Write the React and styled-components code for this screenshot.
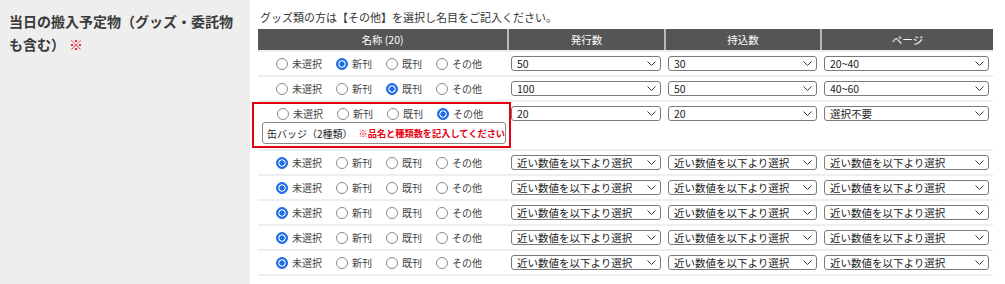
import styled, { createGlobalStyle } from "styled-components";

const GlobalStyle = createGlobalStyle`
  * {
    box-sizing: border-box;
  }
  body {
    margin: 0;
    background: #fff;
    color: #333;
    font-family: "Noto Sans CJK JP", "Noto Sans", sans-serif;
  }
`;

const Layout = styled.div`
  display: flex;
  width: 1005px;
  height: 284px;
`;

const Side = styled.div`
  width: 250px;
  flex-shrink: 0;
  background: #eee;
  padding: 10px 9px;
`;

const Title = styled.h2`
  margin: 0;
  font-size: 14px;
  line-height: 23px;
  font-weight: bold;
  color: #3a3a3a;
`;

const Required = styled.span`
  display: inline-block;
  color: #e60012;
  font-weight: normal;
  margin-left: 4px;
`;

const Main = styled.div`
  flex: 1;
  padding: 9px 12px 0 8px;
`;

const Note = styled.p`
  margin: 0 0 4px 2px;
  font-size: 11px;
  line-height: 16px;
  color: #333;
`;

const Table = styled.table`
  width: 735px;
  border-collapse: collapse;
  table-layout: fixed;
`;

const HeadCell = styled.th`
  height: 22px;
  padding: 0;
  background: #555;
  color: #fff;
  font-size: 10.5px;
  font-weight: normal;
  text-align: center;
  border-bottom: 2px solid #eee;
  & + & {
    border-left: 2px solid #b9b9b9;
  }
`;

const Row = styled.tr`
  border-bottom: 2px solid #eee;
`;

const Cell = styled.td`
  position: relative;
  vertical-align: top;
  padding: 4px 4px 4px 3px;
`;

const NameCell = styled(Cell)`
  padding: ${(p) => (p.$wide ? "4px 2px 5px 4px" : "4px 4px 4px 4px")};
`;

const RadioGroup = styled.div`
  display: flex;
  justify-content: center;
  align-items: center;
  gap: 14px;
  height: 15px;
  padding-right: 8px;
`;

const RadioLabel = styled.label`
  display: flex;
  align-items: center;
  font-size: 10px;
  line-height: 15px;
  color: #444;
`;

const Radio = styled.input.attrs({ type: "radio" })`
  appearance: none;
  width: 12px;
  height: 12px;
  margin: 0 4px 0 0;
  border: 1px solid #8a8a8a;
  border-radius: 50%;
  background: #fff;

  &:checked {
    border-color: #1f6fe6;
    background: radial-gradient(
      circle,
      #1f6fe6 0 2.4px,
      #fff 2.9px 3.4px,
      #1f6fe6 3.9px
    );
  }
`;

const NameBox = styled.div`
  display: flex;
  align-items: center;
  gap: 6px;
  height: 22px;
  margin-top: 1px;
  padding: 0 4px;
  border: 1px solid #8a8a8a;
  border-radius: 3px;
  font-size: 10px;
  color: #222;
  white-space: nowrap;
  overflow: hidden;
`;

const Hint = styled.span`
  color: #e60012;
  font-weight: bold;
  font-size: 9.2px;
`;

const Highlight = styled.div`
  position: absolute;
  top: 0;
  left: -6px;
  right: -3px;
  bottom: 1px;
  border: 2px solid #e60012;
  pointer-events: none;
`;

const SelectWrap = styled.div`
  position: relative;
  height: 15px;
`;

const Select = styled.select`
  appearance: none;
  display: block;
  width: 100%;
  height: 15px;
  margin: 0;
  padding: 0 16px 0 5px;
  border: 1px solid #7a7a7a;
  border-radius: 3px;
  background: #fff;
  font-family: inherit;
  font-size: 10.5px;
  line-height: 13px;
  color: #222;
`;

const Chevron = styled.svg`
  position: absolute;
  top: 5px;
  right: 5px;
  width: 9px;
  height: 5px;
  pointer-events: none;
`;

const PLACEHOLDER = "近い数値を以下より選択";
const KINDS = ["未選択", "新刊", "既刊", "その他"];

const rows = [
  { kind: "新刊", issue: "50", carry: "30", page: "20~40" },
  { kind: "既刊", issue: "100", carry: "50", page: "40~60" },
  { kind: "その他", issue: "20", carry: "20", page: "選択不要", name: "缶バッジ（2種類）" },
  { kind: "未選択" },
  { kind: "未選択" },
  { kind: "未選択" },
  { kind: "未選択" },
  { kind: "未選択" },
];

function Dropdown({ value }) {
  const shown = value || PLACEHOLDER;
  return (
    <SelectWrap>
      <Select defaultValue={shown}>
        <option>{shown}</option>
      </Select>
      <Chevron viewBox="0 0 9 5">
        <polyline points="0.5,0.5 4.5,4.5 8.5,0.5" fill="none" stroke="#333" strokeWidth="1" />
      </Chevron>
    </SelectWrap>
  );
}

function ItemRow({ item, index }) {
  return (
    <Row>
      <NameCell $wide={!!item.name}>
        <RadioGroup>
          {KINDS.map((k) => (
            <RadioLabel key={k}>
              <Radio name={`kind-${index}`} defaultChecked={item.kind === k} />
              {k}
            </RadioLabel>
          ))}
        </RadioGroup>
        {item.name && (
          <>
            <NameBox>
              <span>{item.name}</span>
              <Hint>※品名と種類数を記入してください</Hint>
            </NameBox>
            <Highlight />
          </>
        )}
      </NameCell>
      <Cell>
        <Dropdown value={item.issue} />
      </Cell>
      <Cell>
        <Dropdown value={item.carry} />
      </Cell>
      <Cell>
        <Dropdown value={item.page} />
      </Cell>
    </Row>
  );
}

function App() {
  return (
    <Layout>
      <GlobalStyle />
      <Side>
        <Title>
          当日の搬入予定物（グッズ・委託物も含む）<Required>※</Required>
        </Title>
      </Side>
      <Main>
        <Note>グッズ類の方は【その他】を選択し名目をご記入ください。</Note>
        <Table>
          <colgroup>
            <col style={{ width: 250 }} />
            <col style={{ width: 157 }} />
            <col style={{ width: 156 }} />
            <col style={{ width: 172 }} />
          </colgroup>
          <thead>
            <tr>
              <HeadCell>名称 (20)</HeadCell>
              <HeadCell>発行数</HeadCell>
              <HeadCell>持込数</HeadCell>
              <HeadCell>ページ</HeadCell>
            </tr>
          </thead>
          <tbody>
            {rows.map((item, i) => (
              <ItemRow key={i} item={item} index={i} />
            ))}
          </tbody>
        </Table>
      </Main>
    </Layout>
  );
}

export default App;
